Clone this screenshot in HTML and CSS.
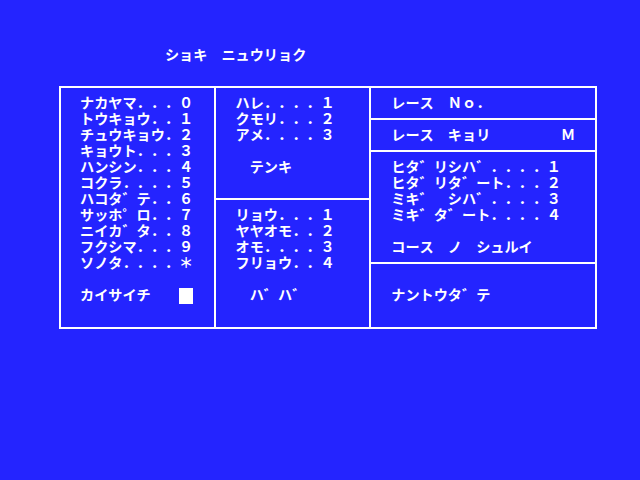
FILE: index.html
```html
<!DOCTYPE html>
<html lang="ja">
<head>
<meta charset="utf-8">
<title>ショキ ニュウリョク</title>
<link rel="stylesheet" href="styles.css">
</head>
<body>
<div class="screen">
  <p class="title">ショキ　ニュウリョク</p>
  <div class="box">
    <div class="col left">
      <p>ナカヤマ．．．０</p>
      <p>トウキョウ．．１</p>
      <p>チュウキョウ．２</p>
      <p>キョウト．．．３</p>
      <p>ハンシン．．．４</p>
      <p>コクラ．．．．５</p>
      <p>ハコタ゛テ．．６</p>
      <p>サッホ゜ロ．．７</p>
      <p>ニイカ゛タ．．８</p>
      <p>フクシマ．．．９</p>
      <p>ソノタ．．．．＊</p>
      <p></p>
      <p class="row">カイサイチ　　<span class="cursor"></span></p>
    </div>
    <div class="col mid">
      <div class="sec weather">
        <p>ハレ．．．．１</p>
        <p>クモリ．．．２</p>
        <p>アメ．．．．３</p>
        <p></p>
        <p>　テンキ</p>
      </div>
      <div class="sec track">
        <p>リョウ．．．１</p>
        <p>ヤヤオモ．．２</p>
        <p>オモ．．．．３</p>
        <p>フリョウ．．４</p>
        <p></p>
        <p>　ハ゛ハ゛</p>
      </div>
    </div>
    <div class="col right">
      <div class="sec no"><p>レース　Ｎｏ．</p></div>
      <div class="sec dist"><p>レース　キョリ　　　　　Ｍ</p></div>
      <div class="sec course">
        <p>ヒタ゛リシハ゛．．．．１</p>
        <p>ヒタ゛リタ゛ート．．．２</p>
        <p>ミキ゛　シハ゛．．．．３</p>
        <p>ミキ゛タ゛ート．．．．４</p>
        <p></p>
        <p>コース　ノ　シュルイ</p>
      </div>
      <div class="sec kind">
        <p></p>
        <p>ナントウタ゛テ</p>
      </div>
    </div>
  </div>
</div>
</body>
</html>
```
FILE: styles.css
```css
html, body {
  margin: 0;
  padding: 0;
  background: #2424ff;
}
body {
  width: 640px;
  height: 480px;
  overflow: hidden;
  color: #ffffff;
  font-family: "Noto Sans CJK JP", "Noto Sans CJK SC", sans-serif;
  font-weight: 700;
  font-size: 14.15px;
  text-spacing-trim: space-all;
  font-kerning: none;
  font-feature-settings: "palt" 0, "halt" 0, "kern" 0;
}
.screen {
  padding-top: 46px;
}
p {
  margin: 0;
  height: 16px;
  line-height: 16px;
  white-space: pre;
  letter-spacing: 0;
}
.title {
  margin-left: 164.9px;
}
.box {
  margin-top: 24px;
  margin-left: 59px;
  width: 534px;
  height: 239px;
  border: 2px solid #ffffff;
  display: grid;
  grid-template-columns: 153px 153px 224px;
  column-gap: 2px;
  background: #ffffff;
}
.col {
  background: #2424ff;
  display: flex;
  flex-direction: column;
}
.col.left {
  padding: 6px 0 0 19px;
}
.col.mid,
.col.right {
  background: #ffffff;
  gap: 2px;
}
.col.mid .sec,
.col.right .sec {
  background: #2424ff;
  padding-top: 6px;
}
.col.mid .sec {
  padding-left: 19.6px;
}
.col.mid .weather {
  height: 104px;
}
.col.mid .track {
  flex: 1;
}
.col.right .sec {
  padding-left: 20.3px;
}
.col.right .no,
.col.right .dist {
  height: 24px;
}
.col.right .course {
  height: 104px;
}
.col.right .kind {
  flex: 1;
}
.row {
  display: flex;
  align-items: flex-start;
}
.cursor {
  display: inline-block;
  width: 14px;
  height: 16px;
  margin-top: 2px;
  background: #ffffff;
}
```
